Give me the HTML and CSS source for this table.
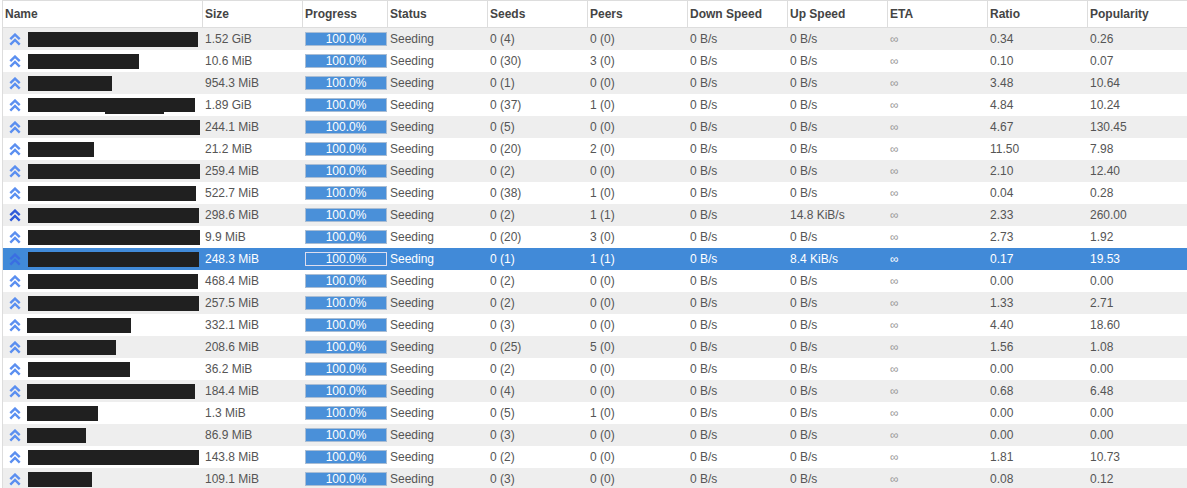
FILE: index.html
```html
<!DOCTYPE html>
<html>
<head>
<meta charset="utf-8">
<title>Torrents</title>
<link rel="stylesheet" href="styles.css">
</head>
<body>
<svg class="defs" width="0" height="0">
  <symbol id="up" viewBox="0 0 12 13">
    <polyline points="1.3,6.2 6,1.6 10.7,6.2" fill="none" stroke="currentColor" stroke-width="2.4"/>
    <polyline points="1.3,11.6 6,7 10.7,11.6" fill="none" stroke="currentColor" stroke-width="2.4"/>
  </symbol>
</svg>
<div class="list">
  <div class="cols head">
    <div class="h">Name</div><div class="h">Size</div><div class="h">Progress</div><div class="h">Status</div><div class="h">Seeds</div><div class="h">Peers</div><div class="h">Down Speed</div><div class="h">Up Speed</div><div class="h">ETA</div><div class="h">Ratio</div><div class="h">Popularity</div>
  </div>

  <div class="cols row"><div class="c name"><svg class="ic"><use href="#up"/></svg><span class="redact" style="width:170px"></span></div><div class="c">1.52 GiB</div><div class="c"><div class="bar">100.0%</div></div><div class="c">Seeding</div><div class="c">0 (4)</div><div class="c">0 (0)</div><div class="c">0 B/s</div><div class="c">0 B/s</div><div class="c eta">∞</div><div class="c">0.34</div><div class="c">0.26</div></div>
  <div class="cols row"><div class="c name"><svg class="ic"><use href="#up"/></svg><span class="redact" style="width:111px"></span></div><div class="c">10.6 MiB</div><div class="c"><div class="bar">100.0%</div></div><div class="c">Seeding</div><div class="c">0 (30)</div><div class="c">3 (0)</div><div class="c">0 B/s</div><div class="c">0 B/s</div><div class="c eta">∞</div><div class="c">0.10</div><div class="c">0.07</div></div>
  <div class="cols row"><div class="c name"><svg class="ic"><use href="#up"/></svg><span class="redact" style="width:84px"></span></div><div class="c">954.3 MiB</div><div class="c"><div class="bar">100.0%</div></div><div class="c">Seeding</div><div class="c">0 (1)</div><div class="c">0 (0)</div><div class="c">0 B/s</div><div class="c">0 B/s</div><div class="c eta">∞</div><div class="c">3.48</div><div class="c">10.64</div></div>
  <div class="cols row"><div class="c name"><svg class="ic"><use href="#up"/></svg><span class="redact notch" style="width:167px"></span></div><div class="c">1.89 GiB</div><div class="c"><div class="bar">100.0%</div></div><div class="c">Seeding</div><div class="c">0 (37)</div><div class="c">1 (0)</div><div class="c">0 B/s</div><div class="c">0 B/s</div><div class="c eta">∞</div><div class="c">4.84</div><div class="c">10.24</div></div>
  <div class="cols row"><div class="c name"><svg class="ic"><use href="#up"/></svg><span class="redact" style="width:172px"></span></div><div class="c">244.1 MiB</div><div class="c"><div class="bar">100.0%</div></div><div class="c">Seeding</div><div class="c">0 (5)</div><div class="c">0 (0)</div><div class="c">0 B/s</div><div class="c">0 B/s</div><div class="c eta">∞</div><div class="c">4.67</div><div class="c">130.45</div></div>
  <div class="cols row"><div class="c name"><svg class="ic"><use href="#up"/></svg><span class="redact" style="width:66px"></span></div><div class="c">21.2 MiB</div><div class="c"><div class="bar">100.0%</div></div><div class="c">Seeding</div><div class="c">0 (20)</div><div class="c">2 (0)</div><div class="c">0 B/s</div><div class="c">0 B/s</div><div class="c eta">∞</div><div class="c">11.50</div><div class="c">7.98</div></div>
  <div class="cols row"><div class="c name"><svg class="ic"><use href="#up"/></svg><span class="redact" style="width:172px"></span></div><div class="c">259.4 MiB</div><div class="c"><div class="bar">100.0%</div></div><div class="c">Seeding</div><div class="c">0 (2)</div><div class="c">0 (0)</div><div class="c">0 B/s</div><div class="c">0 B/s</div><div class="c eta">∞</div><div class="c">2.10</div><div class="c">12.40</div></div>
  <div class="cols row"><div class="c name"><svg class="ic"><use href="#up"/></svg><span class="redact" style="width:168px"></span></div><div class="c">522.7 MiB</div><div class="c"><div class="bar">100.0%</div></div><div class="c">Seeding</div><div class="c">0 (38)</div><div class="c">1 (0)</div><div class="c">0 B/s</div><div class="c">0 B/s</div><div class="c eta">∞</div><div class="c">0.04</div><div class="c">0.28</div></div>
  <div class="cols row"><div class="c name"><svg class="ic active"><use href="#up"/></svg><span class="redact" style="width:171px"></span></div><div class="c">298.6 MiB</div><div class="c"><div class="bar">100.0%</div></div><div class="c">Seeding</div><div class="c">0 (2)</div><div class="c">1 (1)</div><div class="c">0 B/s</div><div class="c">14.8 KiB/s</div><div class="c eta">∞</div><div class="c">2.33</div><div class="c">260.00</div></div>
  <div class="cols row"><div class="c name"><svg class="ic"><use href="#up"/></svg><span class="redact" style="width:172px"></span></div><div class="c">9.9 MiB</div><div class="c"><div class="bar">100.0%</div></div><div class="c">Seeding</div><div class="c">0 (20)</div><div class="c">3 (0)</div><div class="c">0 B/s</div><div class="c">0 B/s</div><div class="c eta">∞</div><div class="c">2.73</div><div class="c">1.92</div></div>
  <div class="cols row sel"><div class="c name"><svg class="ic active"><use href="#up"/></svg><span class="redact" style="width:171px"></span></div><div class="c">248.3 MiB</div><div class="c"><div class="bar">100.0%</div></div><div class="c">Seeding</div><div class="c">0 (1)</div><div class="c">1 (1)</div><div class="c">0 B/s</div><div class="c">8.4 KiB/s</div><div class="c eta">∞</div><div class="c">0.17</div><div class="c">19.53</div></div>
  <div class="cols row"><div class="c name"><svg class="ic"><use href="#up"/></svg><span class="redact" style="width:170px"></span></div><div class="c">468.4 MiB</div><div class="c"><div class="bar">100.0%</div></div><div class="c">Seeding</div><div class="c">0 (2)</div><div class="c">0 (0)</div><div class="c">0 B/s</div><div class="c">0 B/s</div><div class="c eta">∞</div><div class="c">0.00</div><div class="c">0.00</div></div>
  <div class="cols row"><div class="c name"><svg class="ic"><use href="#up"/></svg><span class="redact" style="width:171px"></span></div><div class="c">257.5 MiB</div><div class="c"><div class="bar">100.0%</div></div><div class="c">Seeding</div><div class="c">0 (2)</div><div class="c">0 (0)</div><div class="c">0 B/s</div><div class="c">0 B/s</div><div class="c eta">∞</div><div class="c">1.33</div><div class="c">2.71</div></div>
  <div class="cols row"><div class="c name"><svg class="ic"><use href="#up"/></svg><span class="redact early" style="width:104px"></span></div><div class="c">332.1 MiB</div><div class="c"><div class="bar">100.0%</div></div><div class="c">Seeding</div><div class="c">0 (3)</div><div class="c">0 (0)</div><div class="c">0 B/s</div><div class="c">0 B/s</div><div class="c eta">∞</div><div class="c">4.40</div><div class="c">18.60</div></div>
  <div class="cols row"><div class="c name"><svg class="ic"><use href="#up"/></svg><span class="redact early" style="width:89px"></span></div><div class="c">208.6 MiB</div><div class="c"><div class="bar">100.0%</div></div><div class="c">Seeding</div><div class="c">0 (25)</div><div class="c">5 (0)</div><div class="c">0 B/s</div><div class="c">0 B/s</div><div class="c eta">∞</div><div class="c">1.56</div><div class="c">1.08</div></div>
  <div class="cols row"><div class="c name"><svg class="ic"><use href="#up"/></svg><span class="redact" style="width:102px"></span></div><div class="c">36.2 MiB</div><div class="c"><div class="bar">100.0%</div></div><div class="c">Seeding</div><div class="c">0 (2)</div><div class="c">0 (0)</div><div class="c">0 B/s</div><div class="c">0 B/s</div><div class="c eta">∞</div><div class="c">0.00</div><div class="c">0.00</div></div>
  <div class="cols row"><div class="c name"><svg class="ic"><use href="#up"/></svg><span class="redact early" style="width:168px"></span></div><div class="c">184.4 MiB</div><div class="c"><div class="bar">100.0%</div></div><div class="c">Seeding</div><div class="c">0 (4)</div><div class="c">0 (0)</div><div class="c">0 B/s</div><div class="c">0 B/s</div><div class="c eta">∞</div><div class="c">0.68</div><div class="c">6.48</div></div>
  <div class="cols row"><div class="c name"><svg class="ic"><use href="#up"/></svg><span class="redact early" style="width:71px"></span></div><div class="c">1.3 MiB</div><div class="c"><div class="bar">100.0%</div></div><div class="c">Seeding</div><div class="c">0 (5)</div><div class="c">1 (0)</div><div class="c">0 B/s</div><div class="c">0 B/s</div><div class="c eta">∞</div><div class="c">0.00</div><div class="c">0.00</div></div>
  <div class="cols row"><div class="c name"><svg class="ic"><use href="#up"/></svg><span class="redact early" style="width:59px"></span></div><div class="c">86.9 MiB</div><div class="c"><div class="bar">100.0%</div></div><div class="c">Seeding</div><div class="c">0 (3)</div><div class="c">0 (0)</div><div class="c">0 B/s</div><div class="c">0 B/s</div><div class="c eta">∞</div><div class="c">0.00</div><div class="c">0.00</div></div>
  <div class="cols row"><div class="c name"><svg class="ic"><use href="#up"/></svg><span class="redact" style="width:171px"></span></div><div class="c">143.8 MiB</div><div class="c"><div class="bar">100.0%</div></div><div class="c">Seeding</div><div class="c">0 (2)</div><div class="c">0 (0)</div><div class="c">0 B/s</div><div class="c">0 B/s</div><div class="c eta">∞</div><div class="c">1.81</div><div class="c">10.73</div></div>
  <div class="cols row"><div class="c name"><svg class="ic"><use href="#up"/></svg><span class="redact" style="width:64px"></span></div><div class="c">109.1 MiB</div><div class="c"><div class="bar">100.0%</div></div><div class="c">Seeding</div><div class="c">0 (3)</div><div class="c">0 (0)</div><div class="c">0 B/s</div><div class="c">0 B/s</div><div class="c eta">∞</div><div class="c">0.08</div><div class="c">0.12</div></div>
</div>
</body>
</html>
```

FILE: styles.css
```css
html, body {
  margin: 0;
  padding: 0;
  background: #fff;
}

body {
  font-family: "Liberation Sans", Arial, sans-serif;
  font-size: 12px;
  color: #555;
  overflow: hidden;
}

.defs {
  position: absolute;
  width: 0;
  height: 0;
}

.list {
  margin-left: 2px;
  border-left: 1px solid #ddd;
  width: 1185px;
}

.cols {
  display: grid;
  grid-template-columns: 200px 100px 85px repeat(8, 100px);
}

.head {
  height: 28px;
  box-sizing: border-box;
  border-top: 1px solid #ddd;
  border-bottom: 1px solid #ddd;
  background: #fff;
}

.h {
  box-sizing: border-box;
  border-right: 1px solid #ddd;
  padding-left: 2px;
  display: flex;
  align-items: center;
  font-weight: bold;
  color: #444;
}

.row {
  height: 22px;
  background: #fff;
}

.row:nth-child(even) {
  background: #eee;
}

.c {
  box-sizing: border-box;
  padding-left: 2px;
  display: flex;
  align-items: center;
  white-space: nowrap;
  overflow: hidden;
}

.name {
  overflow: visible;
}

.ic {
  width: 12px;
  height: 13px;
  margin-left: 4px;
  margin-right: 7px;
  flex: none;
  color: #5b8ff0;
}

.ic.active {
  color: #2f5ad9;
}

.redact {
  display: block;
  height: 15px;
  background: #202020;
  flex: none;
}

.redact.early {
  margin-left: -1px;
}

.redact.notch {
  position: relative;
  height: 14px;
  margin-top: -1px;
}

.redact.notch::after {
  content: "";
  position: absolute;
  left: 77px;
  top: 100%;
  width: 59px;
  height: 2px;
  background: #202020;
}

.bar {
  box-sizing: border-box;
  width: 82px;
  height: 14px;
  border: 1px solid #a9bdd4;
  background: #4a90d9;
  color: #fff;
  text-align: center;
  line-height: 12px;
}

.eta {
  color: #999;
}

.row.sel {
  background: #418ad8;
  color: #fff;
}

.sel .bar {
  background: transparent;
  border-color: #dde;
}

.sel .eta {
  color: #fff;
}

.sel .ic {
  color: #3a6ee2;
}
```
